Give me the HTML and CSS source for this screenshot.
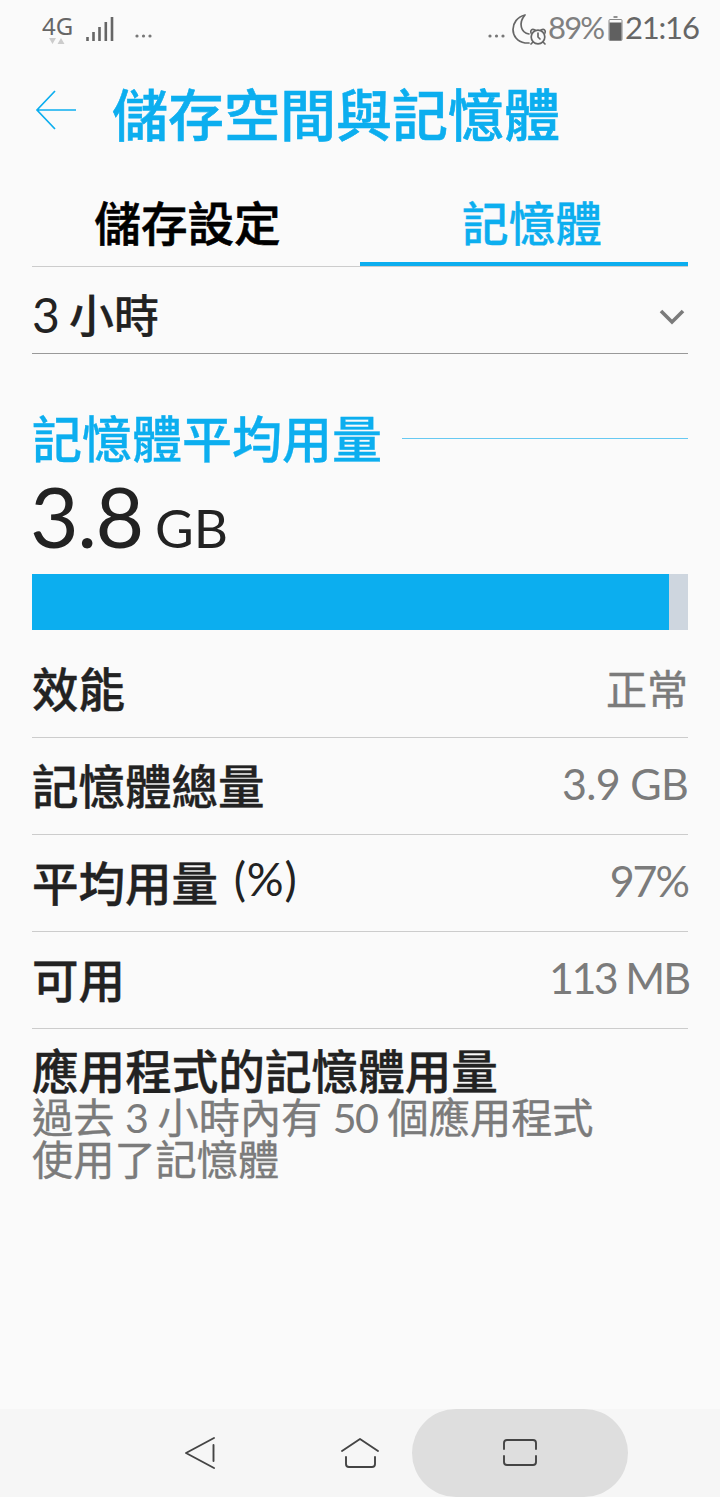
FILE: index.html
```html
<!DOCTYPE html>
<html lang="zh-Hant">
<head>
<meta charset="utf-8">
<title>儲存空間與記憶體</title>
<link rel="stylesheet" href="styles.css">
</head>
<body>
<div class="screen">
  <header class="status">
    <div class="network"><span>4G</span>
      <svg width="18" height="8" viewBox="0 0 18 8"><path d="M1 1h7L4.500 7zM9.500 7h7L13 1z" fill="#ccc"/></svg>
    </div>
    <svg class="signal" width="30" height="26" viewBox="0 0 30 26"><path d="M2.500 21v4M8.500 16v9M14.500 11v14M20.800 6v19M27 1v24" stroke="#666" stroke-width="2.600"/></svg>
    <svg class="dots" width="18" height="4" viewBox="0 0 18 4"><g fill="#777"><circle cx="2" cy="2" r="1.600"/><circle cx="8.500" cy="2" r="1.600"/><circle cx="15" cy="2" r="1.600"/></g></svg>
    <svg class="dots dots-right" width="18" height="4" viewBox="0 0 18 4"><g fill="#777"><circle cx="2" cy="2" r="1.600"/><circle cx="8.500" cy="2" r="1.600"/><circle cx="15" cy="2" r="1.600"/></g></svg>
    <svg class="moon" width="35" height="33" viewBox="0 0 35 33" fill="none" stroke="#666" stroke-width="1.700" stroke-linecap="round" stroke-linejoin="round">
      <path d="M13 2C-3 6-3 27 13 30h4M13 2C6 10 9 20 17 21"/>
      <circle cx="26" cy="24" r="6.800"/><path d="M26 20v4l2 2M21 29l-2 2M31 29l2 2M19 20c-1-3 1-4.500 4-3M33 20c1-3-1-4.500-4-3"/>
    </svg>
    <span class="percent">89%</span>
    <svg class="battery" width="15" height="26" viewBox="0 0 15 26"><path d="M5.500 1h4" stroke="#777" stroke-width="1.600"/><rect x="1" y="3.500" width="13" height="21" rx="1" fill="#fafafa" stroke="#888"/><path d="M1.500 6.500h12V24h-12z" fill="#606060"/></svg>
    <span class="clock">21:16</span>
  </header>

  <div class="titlebar">
    <svg class="back" width="42" height="42" viewBox="0 0 42 42" fill="none" stroke="#0caeef" stroke-width="1.700"><path d="M20 2L2 21l18 19M2 21h39"/></svg>
    <h1>儲存空間與記憶體</h1>
  </div>

  <main>
    <nav class="tabs"><span class="tab">儲存設定</span><span class="tab selected">記憶體</span></nav>
    <div class="period"><span><span class="num">3</span>小時</span>
      <svg width="26" height="18" viewBox="0 0 26 18" fill="none" stroke="#7b7b7b" stroke-width="3.600"><path d="M2 4l11 11L24 4"/></svg>
    </div>
    <h2 class="section"><span>記憶體平均用量</span></h2>
    <div class="usage"><span class="amount">3.8</span><span class="unit">GB</span></div>
    <div class="bar"><div class="fill" style="width: 97.1%"></div></div>
    <div class="row"><span>效能</span><span class="value cjk">正常</span></div>
    <div class="row"><span>記憶體總量</span><span class="value gb">3.9 GB</span></div>
    <div class="row"><span>平均用量 <span class="paren">(%)</span></span><span class="value pct">97%</span></div>
    <div class="row"><span>可用</span><span class="value mb"><span class="ones">113</span> MB</span></div>
    <section class="apps">
      <h3>應用程式的記憶體用量</h3>
      <p>過去 <span class="n">3</span> 小時內有 <span class="n">50</span> 個應用程式<br>使用了記憶體</p>
    </section>
  </main>

  <footer class="navbar">
    <div class="key back-key"><svg width="36" height="36" viewBox="0 0 36 36"><path d="M34 3L6 18l28 15M33.500 10v16"/></svg></div>
    <div class="key"><svg width="42" height="36" viewBox="0 0 42 36"><path d="M3 16L21 4l18 12M7 22v7q0 3 3 3h23q3 0 3-3v-7"/></svg></div>
    <div class="key pressed"><svg width="36" height="30" viewBox="0 0 36 30"><path d="M2 11V5q0-3 3-3h26q3 0 3 3v6M2 18v6q0 3 3 3h26q3 0 3-3v-6"/></svg></div>
  </footer>
</div>
</body>
</html>
```
FILE: styles.css
```css
* { box-sizing: border-box; }
body { margin: 0; background: #fafafa; color: #222; font-family: Lato, "Noto Sans CJK TC", sans-serif; }
svg { display: block; flex: none; }
h1, h2, h3, p { margin: 0; font-weight: 500; }
.screen { width: 720px; height: 1497px; display: flex; flex-direction: column; }

.status { height: 60px; display: flex; align-items: flex-start; padding: 0 14px 0 42px; color: #666; }
.network { width: 32px; padding-top: 15px; font: 24px/22px "Noto Sans", sans-serif; }
.network svg { margin-left: 6px; }
.signal { margin: 16px 0 0 11px; }
.dots { margin: 34px 0 0 20px; }
.dots-right { margin-left: auto; }
.moon { margin: 13px 1px 0 6px; }
.percent { width: 59px; padding-top: 9px; font-size: 31px; line-height: 36px; letter-spacing: -1.8px; color: #808080; }
.battery { margin: 16px 2px 0 1px; }
.clock { width: 81px; padding-top: 9px; font-size: 31px; line-height: 36px; letter-spacing: -1.2px; white-space: nowrap; }

.titlebar { height: 120px; display: flex; padding-left: 35px; color: #0caeef; }
.back { margin-top: 29px; }
h1 { margin: 13px 0 0 35px; font-size: 56px; line-height: 84px; -webkit-text-stroke: 0.6px; }

main { flex: 1; padding: 0 32px; }
.tabs { height: 87px; display: grid; grid-template: 86px / 1fr 1fr; border-bottom: 1px solid #ccc; }
.tab { text-align: center; font-size: 46.6px; font-weight: 500; line-height: 86px; color: #000; padding-right: 17px; -webkit-text-stroke: 0.6px; }
.tab.selected { color: #0caeef; border-bottom: 4px solid #0caeef; padding: 0 0 0 16px; -webkit-text-stroke: 0.3px; }
.period { height: 87px; display: flex; justify-content: space-between; align-items: center; border-bottom: 1px solid #999; padding: 11px 3px 0 0; font-size: 45px; font-weight: 500; line-height: 76px; -webkit-text-stroke: 0.2px; }
.num { display: inline-block; width: 37px; font-size: 48px; font-weight: 400; letter-spacing: 0; -webkit-text-stroke: 0; }
.section { display: flex; align-items: center; gap: 20px; height: 66px; margin-top: 52px; color: #0caeef; font-size: 50px; line-height: 66px; -webkit-text-stroke: 0.3px; }
.section::after { content: ""; flex: 1; height: 1px; background: #67c9f2; margin-bottom: 1px; }
.usage { display: flex; align-items: baseline; height: 102px; line-height: 88px; }
.amount { width: 125px; font-size: 84px; letter-spacing: -1.5px; margin-left: -2px; }
.unit { font-size: 53px; }
.bar { height: 56px; background: #ced6df; }
.fill { height: 100%; background: #0caeef; }
.row { height: 97px; display: flex; justify-content: space-between; border-bottom: 1px solid #ccc; font-size: 46.5px; font-weight: 500; line-height: 97px; -webkit-text-stroke: 0.4px; }
.bar + .row { height: 108px; padding-top: 11px; }
.value { color: #7b7b7b; font-size: 43px; font-weight: 400; line-height: 91px; -webkit-text-stroke: 0; }
.gb { letter-spacing: -0.7px; }
.pct { letter-spacing: -2px; }
.mb { letter-spacing: -2px; margin-right: -1px; }
.ones { letter-spacing: -2.5px; }
.cjk { font-size: 41px; line-height: 98px; -webkit-text-stroke: 0.5px; }
.paren { position: relative; top: -5px; margin-left: 4px; font-weight: 400; font-size: 46px; letter-spacing: 0.8px; -webkit-text-stroke: 0; }
.apps { padding-top: 17px; }
h3 { font-size: 46.6px; line-height: 50px; -webkit-text-stroke: 0.4px; }
.apps p { color: #7b7b7b; font-size: 41.2px; line-height: 42px; font-weight: 400; -webkit-text-stroke: 0.4px; }
.n { letter-spacing: -1.8px; -webkit-text-stroke: 0; }

.navbar { height: 88px; background: #f6f6f6; display: flex; justify-content: center; }
.key { width: 160px; height: 88px; display: flex; align-items: center; justify-content: center; }
.key svg { fill: none; stroke: #444; stroke-width: 1.900; stroke-linecap: round; stroke-linejoin: round; }
.back-key { padding-right: 4px; }
.pressed { width: 216px; margin: 0 -28px; border-radius: 44px; background: #dedede; }
```
